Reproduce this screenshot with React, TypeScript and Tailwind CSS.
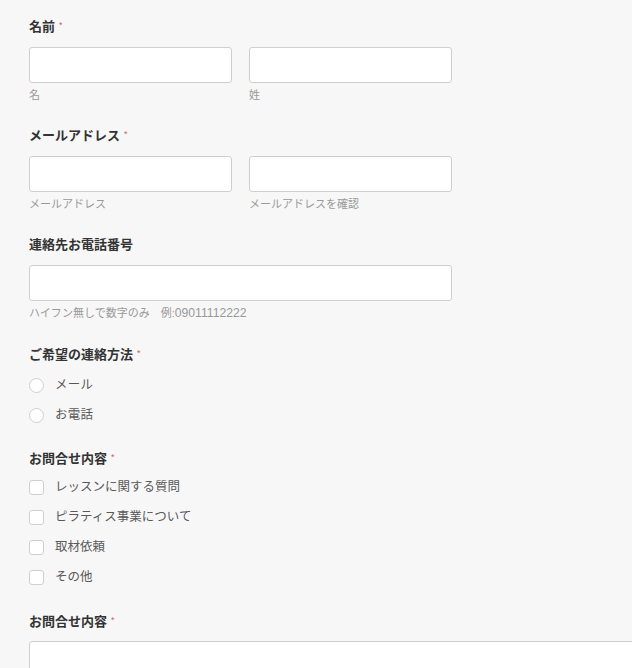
import React from "react"

const fontStack = "font-['Liberation_Sans','Noto_Sans_CJK_JP',sans-serif]"

function Label({ text, required }: { text: string; required?: boolean }) {
  return (
    <div className="h-4 flex items-start text-[13px] leading-4 font-bold text-[#333]">
      <span>{text}</span>
      {required && <span className="ml-[4px] text-[9px] leading-3 font-normal text-[#d25a5a]">*</span>}
    </div>
  )
}

function TextInput({ className = "" }: { className?: string }) {
  return (
    <input
      type="text"
      className={`h-9 bg-white border border-[#cfcfcf] rounded-[3px] outline-none ${className}`}
    />
  )
}

function Hint({ children }: { children: React.ReactNode }) {
  return <div className="mt-[5px] h-[14px] text-[11px] leading-[14px] text-[#999]">{children}</div>
}

function Radio({ label }: { label: string }) {
  return (
    <label className="h-[30px] flex items-center gap-[11px]">
      <span className="w-[15px] h-[15px] rounded-full bg-white border border-[#cfcfcf] shrink-0" />
      <span className="text-[12.5px] text-[#595959] tracking-[0.3px]">{label}</span>
    </label>
  )
}

function Check({ label }: { label: string }) {
  return (
    <label className="h-[30px] flex items-center gap-[11px]">
      <span className="w-[15px] h-[15px] rounded-[3px] bg-white border border-[#cfcfcf] shrink-0" />
      <span className="text-[12.5px] text-[#595959]">{label}</span>
    </label>
  )
}

export default function App() {
  return (
    <div className={`${fontStack} w-full h-[668px] overflow-hidden bg-[#f7f7f7]`}>
      <form className="pl-[29px] pt-[19px] flex flex-col">
        {/* 名前 */}
        <Label text="名前" required />
        <div className="mt-3 flex gap-[17px]">
          <div className="flex flex-col">
            <TextInput className="w-[203px]" />
            <Hint>名</Hint>
          </div>
          <div className="flex flex-col">
            <TextInput className="w-[203px]" />
            <Hint>姓</Hint>
          </div>
        </div>

        {/* メールアドレス */}
        <div className="mt-[26px]">
          <Label text="メールアドレス" required />
        </div>
        <div className="mt-3 flex gap-[17px]">
          <div className="flex flex-col">
            <TextInput className="w-[203px]" />
            <Hint>メールアドレス</Hint>
          </div>
          <div className="flex flex-col">
            <TextInput className="w-[203px]" />
            <Hint>メールアドレスを確認</Hint>
          </div>
        </div>

        {/* 電話番号 */}
        <div className="mt-[26px]">
          <Label text="連絡先お電話番号" />
        </div>
        <div className="mt-3 flex flex-col">
          <TextInput className="w-[423px]" />
          <Hint>
            ハイフン無しで数字のみ　例:<span className="text-[12.2px]">09011112222</span>
          </Hint>
        </div>

        {/* 連絡方法 */}
        <div className="mt-[27px]">
          <Label text="ご希望の連絡方法" required />
        </div>
        <div className="mt-[7px] flex flex-col">
          <Radio label="メール" />
          <Radio label="お電話" />
        </div>

        {/* お問合せ内容 */}
        <div className="mt-[21px]">
          <Label text="お問合せ内容" required />
        </div>
        <div className="mt-[5px] flex flex-col">
          <Check label="レッスンに関する質問" />
          <Check label="ピラティス事業について" />
          <Check label="取材依頼" />
          <Check label="その他" />
        </div>

        <div className="mt-[22px]">
          <Label text="お問合せ内容" required />
        </div>
        <textarea className="mt-[11px] w-[700px] h-[140px] bg-white border border-[#cfcfcf] rounded-[3px] outline-none resize-none" />
      </form>
    </div>
  )
}
